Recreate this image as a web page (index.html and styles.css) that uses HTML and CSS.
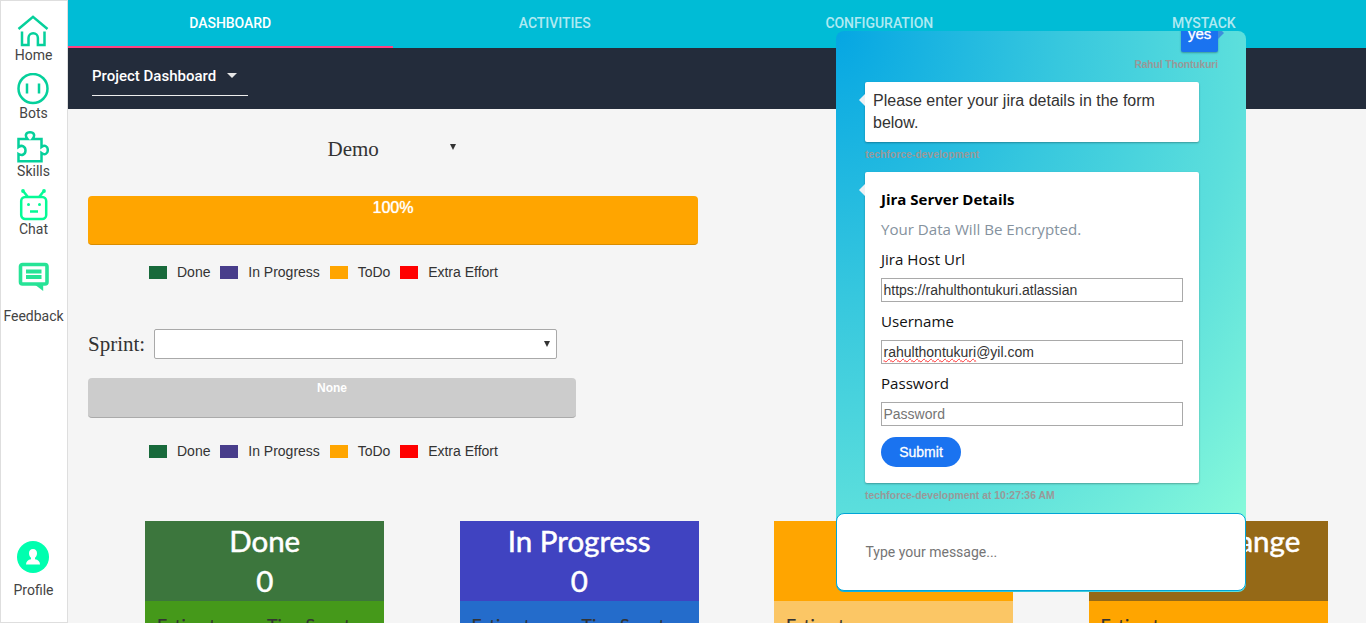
FILE: index.html
```html
<!DOCTYPE html>
<html lang="en">
<head>
<meta charset="utf-8">
<title>Project Dashboard</title>
<link rel="stylesheet" href="styles.css">
</head>
<body>
<nav class="sidebar">
  <a class="side-item"><svg width="32" height="32" viewBox="0 0 32 32"><path d="M1.500 14 16 1.800 30.500 14M5 16.500V30h6.500V23a4.700 4.700 0 0 1 9.400 0v7H27.500V16.500"/></svg><span>Home</span></a>
  <a class="side-item"><svg width="32" height="32" viewBox="0 0 32 32"><circle cx="16" cy="15.500" r="14.500"/><path d="M10 10.500v10M22 10.500v10"/></svg><span>Bots</span></a>
  <a class="side-item"><svg width="32" height="32" viewBox="0 0 32 32"><path d="M1.500 8H10.500C7.500 4.500 9 1.300 13 1.300S18.500 4.500 15.500 8H24.500V16C28 13.500 30.800 15.500 30.800 19S28 24.500 24.500 22V30.300H1.500V23C5 25 8.500 23.500 8.500 19.500S5 13.500 1.500 16Z"/></svg><span>Skills</span></a>
  <a class="side-item bright"><svg width="32" height="32" viewBox="0 0 32 32"><rect x="4.200" y="8" width="25" height="22" rx="4"/><path d="M10.500 7.500 6.500 2.500M22.500 7.500 26.500 2.500M13 22.500h8"/><g class="dots"><circle cx="6" cy="2" r="1.900"/><circle cx="27" cy="2" r="1.900"/><circle cx="11.500" cy="15.500" r="1.500"/><circle cx="22.500" cy="15.500" r="1.500"/></g></svg><span>Chat</span></a>
  <a class="side-item feedback"><svg width="32" height="32" viewBox="0 0 32 32"><path d="M5.500 3.500H28a2 2 0 0 1 2 2V21a2 2 0 0 1-2 2H5.500a2 2 0 0 1-2-2V5.500a2 2 0 0 1 2-2Z" stroke-width="3.600"/><path d="M9 10.500h15.500M9 16h15.500" stroke-width="3.800"/><path class="tail" d="M17 23h9.200v7Z"/></svg><span>Feedback</span></a>
  <a class="side-item profile"><svg width="32" height="32" viewBox="0 0 32 32"><circle class="disc" cx="16" cy="16" r="16"/><path class="person" d="M16 8c2.600 0 4 1.800 4 4.300 0 2-.9 3.600-2 4.500v1.400c3 .6 5 2 5 5.300H9c0-3.300 2-4.700 5-5.300v-1.400c-1.100-.9-2-2.500-2-4.500C12 9.800 13.400 8 16 8Z"/></svg><span>Profile</span></a>
</nav>

<div class="main">
  <header class="tabs">
    <div class="tab active">DASHBOARD</div>
    <div class="tab">ACTIVITIES</div>
    <div class="tab">CONFIGURATION</div>
    <div class="tab">MYSTACK</div>
  </header>
  <div class="toolbar">
    <div class="view-select"><span>Project Dashboard</span><i class="caret"></i></div>
  </div>
  <div class="content">
    <div class="project-select"><span>Demo</span><i class="arrow"></i></div>
    <div class="bar bar-project">100%</div>
    <div class="legend">
      <i class="green"></i><span>Done</span><i class="purple"></i><span>In Progress</span><i class="orange"></i><span>ToDo</span><i class="red"></i><span>Extra Effort</span>
    </div>
    <div class="sprint"><label>Sprint:</label><div class="sprint-select"><i class="arrow"></i></div></div>
    <div class="bar bar-sprint">None</div>
    <div class="legend">
      <i class="green"></i><span>Done</span><i class="purple"></i><span>In Progress</span><i class="orange"></i><span>ToDo</span><i class="red"></i><span>Extra Effort</span>
    </div>
    <div class="cards">
      <section class="card done"><div class="head">Done<br>0</div><div class="body"><span>Estimate</span><span>TimeSpent</span></div></section>
      <section class="card progress"><div class="head">In Progress<br>0</div><div class="body"><span>Estimate</span><span>TimeSpent</span></div></section>
      <section class="card todo"><div class="head"></div><div class="body"><span>Estimate</span></div></section>
      <section class="card scope"><div class="head">Scope Change</div><div class="body"><span>Estimate</span></div></section>
    </div>
  </div>
</div>

<aside class="chat">
  <div class="messages">
    <div class="bubble mine">yes</div>
    <div class="meta right">Rahul Thontukuri</div>
    <div class="bubble">Please enter your jira details in the form below.</div>
    <div class="meta">techforce-development</div>
    <div class="bubble form">
      <div class="form-title">Jira Server Details</div>
      <div class="form-note">Your Data Will Be Encrypted.</div>
      <div class="form-label">Jira Host Url</div>
      <div class="field">https://rahulthontukuri.atlassian</div>
      <div class="form-label">Username</div>
      <div class="field"><span class="misspelled">rahulthontukuri</span>@yil.com</div>
      <div class="form-label">Password</div>
      <div class="field placeholder">Password</div>
      <div class="submit">Submit</div>
    </div>
    <div class="meta">techforce-development at 10:27:36 AM</div>
  </div>
  <div class="composer">Type your message...</div>
</aside>
</body>
</html>
```
FILE: styles.css
```css
* { box-sizing: border-box; }
body {
  margin: 0; height: 623px; overflow: hidden; display: flex; position: relative;
  background: #f5f5f5; color: #333; font-family: Roboto, sans-serif;
}

.sidebar {
  width: 68px; height: 623px; flex: none; display: flex; flex-direction: column;
  background: #fff; border: 1px solid #dedede; padding-top: 14px; font-size: 14px; color: #444;
}
.side-item { height: 58px; display: flex; flex-direction: column; align-items: center; line-height: 16px; padding-right: 1px; }
.side-item svg { flex: none; margin-right: 1px; fill: none; stroke: #05d09b; stroke-width: 2.5; }
.side-item.bright svg { stroke: #05fa96; }
.side-item.bright .dots { fill: #05fa96; stroke: none; }
.feedback { margin-top: 14px; height: 65px; }
.side-item.feedback svg { stroke: #26e396; margin-bottom: 15px; }
.feedback .tail { fill: #26e396; stroke: none; }
.profile { margin-top: auto; height: 81px; }
.side-item.profile svg { stroke: none; margin-bottom: 9px; }
.profile .disc { fill: #00ffaf; }
.profile .person { fill: #fff; }

.main { flex: 1; min-width: 0; height: 623px; overflow: hidden; }
.tabs { height: 48px; display: flex; background: #00bcd6; }
.tab {
  flex: 1; text-align: center; line-height: 46px; font-size: 14px; font-weight: 500; letter-spacing: -.05px;
  color: rgba(255,255,255,.7); border-bottom: 2px solid transparent;
}
.tab.active { color: #fff; border-bottom-color: #ff4081; }
.toolbar { height: 61px; background: #232c3b; padding: 8px 24px; }
.view-select {
  width: 156px; height: 40px; display: flex; align-items: center; border-bottom: 1px solid #eee;
  color: #fff; font-size: 15px; font-weight: 500;
}
.caret { margin-left: 11px; border: 5px solid transparent; border-top-color: #e6e6e6; border-bottom: 0; }

.content { padding: 0 20px; font-family: "Liberation Sans", Arial, sans-serif; }
.project-select {
  margin: 27px 0 0 235px; width: 138px; height: 24px; padding: 0 5px 0 4.500px;
  display: flex; justify-content: space-between; font: 21px/26px "Liberation Serif", serif;
}
.arrow { border: 3px solid transparent; border-top: 6px solid #333; border-bottom: 0; margin-top: 8px; height: 0; }
.bar { color: #fff; text-align: center; border-radius: 4px; }
.bar-project {
  margin-top: 36px; width: 610px; height: 49px; background: #ffa500;
  border-bottom: 1px solid #d98c00; font-size: 16px; line-height: 24px; text-shadow: 0 0 1px #fff;
}
.legend { display: flex; align-items: center; margin: 18px 0 0 61px; height: 18px; font-size: 14px; }
.legend i { width: 18px; height: 13px; margin-right: 10px; }
.legend span { margin-right: 9.800px; white-space: nowrap; }
.green { background: #186a3b; }
.purple { background: #483d8b; }
.orange { background: #ffa500; }
.red { background: #f00; }
.sprint { display: flex; margin-top: 48px; height: 30px; font: 21px/30px "Liberation Serif", serif; }
.sprint label { width: 66px; }
.sprint-select {
  width: 403px; border: 1px solid #a9a9a9; border-radius: 2px; background: #fff;
  display: flex; justify-content: flex-end; padding: 3px 6px;
}
.bar-sprint {
  margin-top: 19px; width: 488px; height: 40px; background: #ccc; border-bottom: 1px solid #aaa;
  font-size: 12px; line-height: 20px; font-weight: bold;
}
.bar-sprint + .legend { margin-top: 24px; }

.cards { display: grid; grid-template-columns: repeat(4, minmax(0, 1fr)); margin-top: 61px; font-family: Lato, sans-serif; }
.card { margin: 0 18.100px 0 57px; }
.head {
  height: 80px; color: #fff; text-align: center; font-size: 29.500px; line-height: 40px;
  white-space: nowrap; -webkit-text-stroke: .5px #fff;
}
.body { height: 100px; display: flex; padding: 14px 12px; font-size: 17.800px; line-height: 20px; color: #333; -webkit-text-stroke: .2px #333; }
.body span { flex: none; width: 110px; }
.done .head { background: #3c763d; }
.done .body { background: #45991a; }
.progress .head { background: #4043c1; }
.progress .body { background: #246ccb; }
.todo .head { background: #ffa500; }
.todo .body { background: #fbc665; }
.scope .head { background: #956917; }
.scope .body { background: #ffa500; }

.chat {
  position: absolute; left: 836px; top: 31px; width: 410px; height: 561px; overflow: hidden;
  border-radius: 8px; display: flex; flex-direction: column;
  background: radial-gradient(ellipse farthest-corner at top left, #05a6e3, #36c7de 38%, #5cdfdc 70%, #88fada) 0 0 / 100% 492px;
  font-family: "Liberation Sans", Arial, sans-serif;
}
.messages { height: 482px; flex: none; padding: 0 47px 0 29px; display: flex; flex-direction: column; align-items: flex-start; }
.bubble {
  position: relative; width: 334px; background: #fff; border-radius: 2px; padding: 8px;
  font-size: 16px; line-height: 22px; box-shadow: 0 1px 2px rgba(0,0,0,.3);
}
.bubble::before {
  content: ""; position: absolute; left: -6px; top: 12px;
  border: 6px solid transparent; border-right-color: #edf0f4; border-left: 0;
}
.bubble.mine {
  width: 37px; height: 37px; margin: -16px -19px 0 0; align-self: flex-end;
  background: #1a73f0; color: #fff; padding: 8px 7px; font-size: 15px; -webkit-text-stroke: .3px #fff;
}
.bubble.mine::before { left: auto; right: -6px; border: 6px solid transparent; border-left-color: #3d8edc; border-right: 0; }
.meta { height: 30px; padding-top: 7px; font-size: 10.400px; line-height: 12px; font-weight: bold; color: #999; white-space: nowrap; }
.meta.right { align-self: flex-end; margin-right: -19px; letter-spacing: -.15px; }
.bubble.form { height: 311px; padding: 16px; font: 15.100px/22px "Open Sans", sans-serif; color: #111; }
.form-title { font-size: 15px; font-weight: bold; margin-bottom: 8px; color: #000; }
.form-note { color: #85929e; margin-bottom: 8px; }
.form-label { height: 22px; margin-bottom: 8px; }
.field {
  height: 24px; border: 1px solid #a9a9a9; padding-left: 1.500px; margin-bottom: 8px;
  font: 14px/22px "Liberation Sans", Arial, sans-serif; color: #333;
}
.field.placeholder { color: #757575; }
.misspelled { text-decoration: underline wavy #f33 1px; text-underline-offset: 1px; }
.submit {
  margin-top: 11px; width: 80px; height: 30px; border-radius: 15px; background: #1a73f0; color: #fff;
  text-align: center; font: 14px/30px "Liberation Sans", Arial, sans-serif; -webkit-text-stroke: .3px #fff;
}
.composer {
  height: 78px; flex: none; background: #fff; border: 1px solid #00a5d6; border-radius: 8px;
  padding-left: 28.500px; font: 14px/76px Roboto, sans-serif; color: #757575;
}
```
